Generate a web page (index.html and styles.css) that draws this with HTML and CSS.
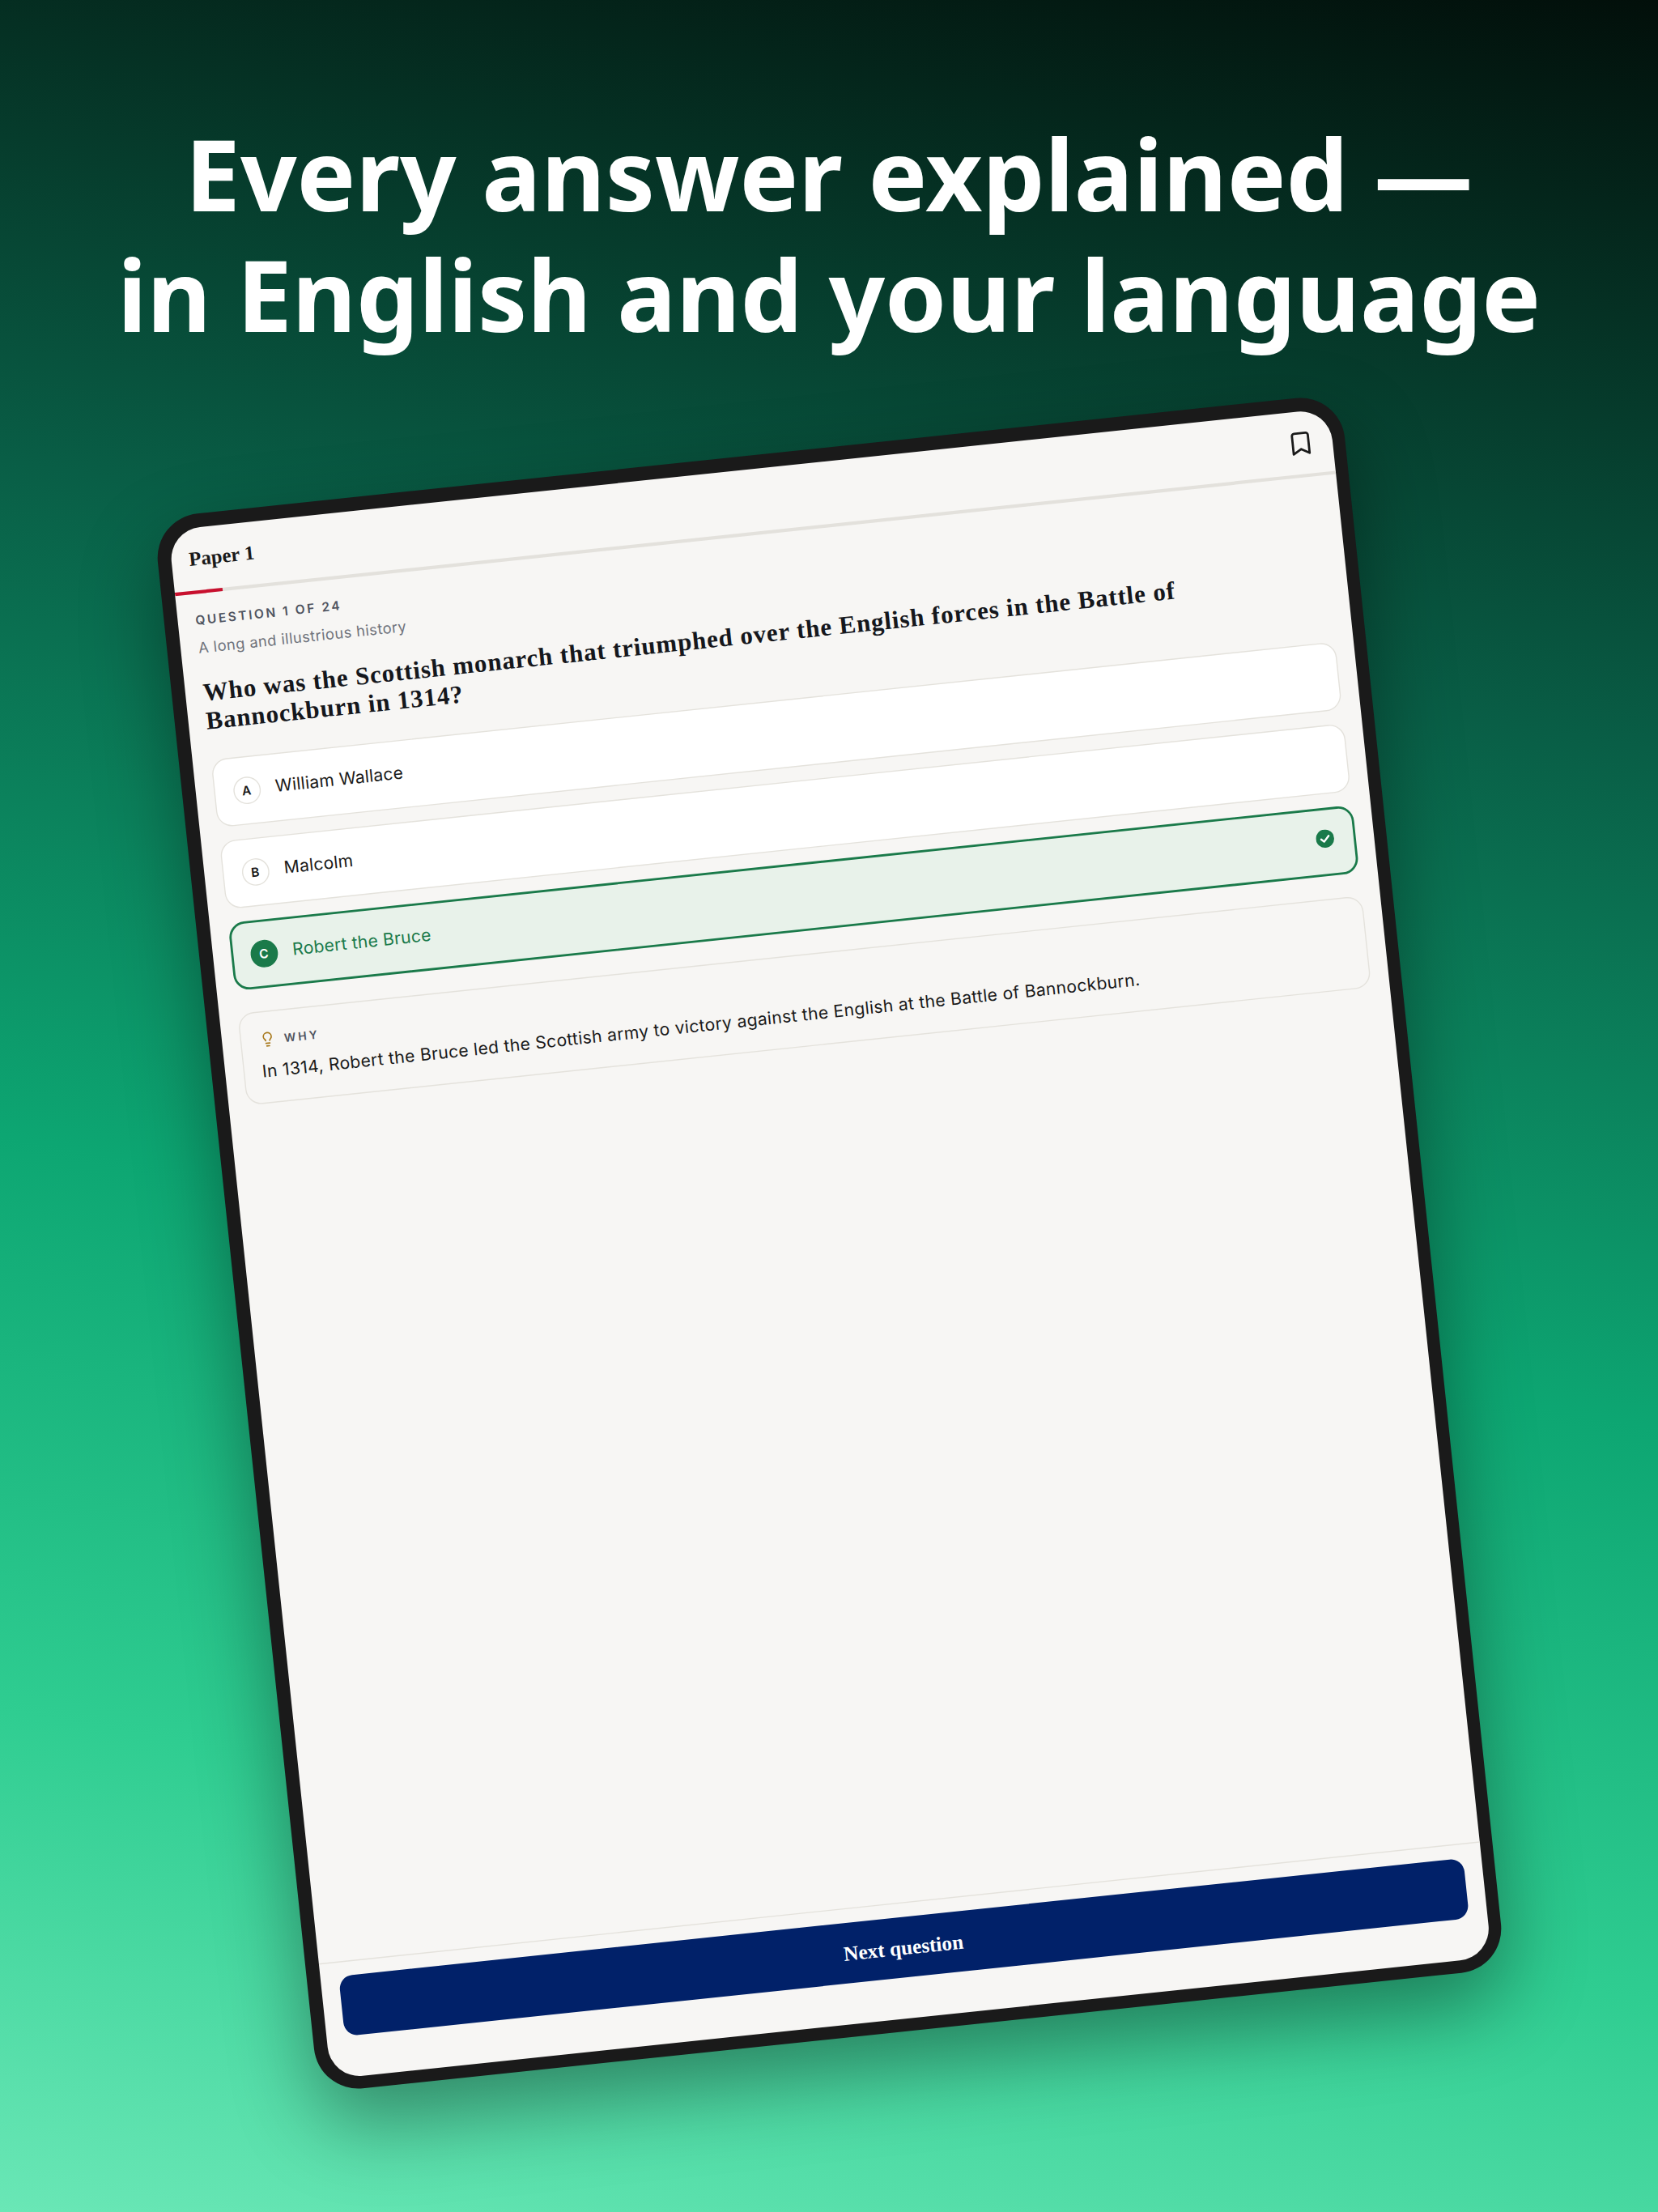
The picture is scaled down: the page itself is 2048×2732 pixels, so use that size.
FILE: index.html
```html
<!DOCTYPE html>
<html lang="en">
<head>
  <meta charset="UTF-8" />
  <title>Every answer explained</title>
  <link rel="stylesheet" href="styles.css">
</head>
<body>
  <div class="page">
    <h1 class="headline">Every answer explained —<br>in English and your language</h1>

    <!-- Tablet frame, the screen inside keeps its 1024x1366 layout -->
    <div class="device">
      <div class="screen">
        <div class="top-bar">
          <span class="paper-title">Paper 1</span>
          <svg class="bookmark" viewBox="0 0 24 24" fill="none" stroke="#1a1a1a" stroke-width="2" stroke-linejoin="round">
            <path d="m19 21-7-4-7 4V5a2 2 0 0 1 2-2h10a2 2 0 0 1 2 2v16z"/>
          </svg>
        </div>
        <div class="progress"><div class="progress-fill"></div></div>

        <div class="content">
          <div class="eyebrow">QUESTION 1 OF 24</div>
          <div class="topic">A long and illustrious history</div>
          <h2 class="question">Who was the Scottish monarch that triumphed over the English forces in the Battle of<br>Bannockburn in 1314?</h2>

          <div class="options">
            <div class="option">
              <span class="letter">A</span>
              <span class="option-text">William Wallace</span>
            </div>
            <div class="option">
              <span class="letter">B</span>
              <span class="option-text">Malcolm</span>
            </div>
            <div class="option correct">
              <span class="letter">C</span>
              <span class="option-text">Robert the Bruce</span>
              <svg class="check" viewBox="0 0 16 16">
                <circle cx="8" cy="8" r="8" fill="#1a7a4a"/>
                <path d="M4.6 8.3 7 10.6l4.4-4.8" fill="none" stroke="#fff" stroke-width="1.7" stroke-linecap="round" stroke-linejoin="round"/>
              </svg>
            </div>
          </div>

          <div class="why">
            <div class="why-label">
              <svg class="bulb" viewBox="0 0 24 24" fill="none" stroke="#a8791c" stroke-width="2" stroke-linecap="round" stroke-linejoin="round">
                <path d="M15 14c.2-1 .7-1.7 1.5-2.5 1-.9 1.5-2.2 1.5-3.5A6 6 0 0 0 6 8c0 1 .2 2.2 1.5 3.5.7.7 1.3 1.5 1.5 2.5"/>
                <path d="M9 18h6"/>
                <path d="M10 22h4"/>
              </svg>
              <span>WHY</span>
            </div>
            <p class="why-text">In 1314, Robert the Bruce led the Scottish army to victory against the English at the Battle of Bannockburn.</p>
          </div>
        </div>

        <div class="footer">
          <div class="next-btn">Next question</div>
        </div>
      </div>
    </div>
  </div>
</body>
</html>
```

FILE: styles.css
```css
body {
  margin: 0;
  font-family: "Inter", "Liberation Sans", sans-serif;
  color: #1a1a1a;
}

.page {
  width: 2048px;
  height: 2732px;
  overflow: hidden;
  display: flex;
  flex-direction: column;
  align-items: center;
  background: linear-gradient(190deg, #020f0a 0%, #095e46 30%, #0da672 57%, #2fcd91 80%, #6ae7b6 100%);
}

/* Titular */
.headline {
  margin: 140px 0 0;
  font-family: "Noto Sans", sans-serif;
  font-size: 122px;
  line-height: 148.5px;
  font-weight: 700;
  color: #fff;
  text-align: center;
  white-space: nowrap;
}

/* Marco de la tablet */
.device {
  flex: none;
  margin-top: 404px;
  box-sizing: border-box;
  width: 1047px;
  height: 1389px;
  padding: 11.5px;
  border-radius: 39px;
  background-color: #1a1a1a;
  box-shadow: 0 30px 70px rgba(0, 0, 0, 0.38);
  transform: rotate(-6deg) scale(1.408);
}

.screen {
  width: 1024px;
  height: 1366px;
  border-radius: 28px;
  overflow: hidden;
  background-color: #f7f6f4;
  display: flex;
  flex-direction: column;
}

/* Barra superior */
.top-bar {
  flex: none;
  height: 55px;
  padding: 0 16px;
  display: flex;
  align-items: center;
  justify-content: space-between;
}

.paper-title {
  font-family: "Liberation Serif", serif;
  font-size: 17.5px;
  font-weight: 700;
}

.bookmark {
  width: 24px;
  height: 24px;
  margin-top: 2px;
}

.progress {
  flex: none;
  height: 3px;
  background-color: #e3e1dc;
}

.progress-fill {
  width: 4.17%;
  height: 100%;
  background-color: #c8102e;
}

/* Contenido */
.content {
  padding: 16.5px 16px 0;
}

.eyebrow {
  font-size: 11px;
  line-height: 14px;
  font-weight: 600;
  letter-spacing: 1.85px;
  color: #4f5460;
}

.topic {
  margin-top: 8px;
  font-size: 13px;
  line-height: 18px;
  color: #6f737c;
  letter-spacing: 0.32px;
}

.question {
  margin: 17.5px 0 0;
  font-family: "Liberation Serif", serif;
  font-size: 22px;
  line-height: 25.5px;
  font-weight: 700;
  letter-spacing: 0.65px;
  color: #15171c;
}

.options {
  margin-top: 21px;
  display: flex;
  flex-direction: column;
  gap: 12px;
}

.option {
  box-sizing: border-box;
  height: 60px;
  padding: 0 16px;
  display: flex;
  align-items: center;
  gap: 13.5px;
  background-color: #fff;
  border: 1px solid #e4e2dc;
  border-radius: 14px;
}

.letter {
  flex: none;
  box-sizing: border-box;
  width: 24px;
  height: 24px;
  display: flex;
  align-items: center;
  justify-content: center;
  font-size: 11px;
  font-weight: 600;
  border: 1px solid #e4e2dc;
  border-radius: 50%;
}

.option-text {
  padding-bottom: 3px;
  font-size: 15px;
  letter-spacing: 0.15px;
}

.option.correct {
  padding: 0 15px;
  background-color: #e8f2ea;
  border: 2px solid #1a7a4a;
}

.option.correct .letter {
  color: #fff;
  background-color: #1a7a4a;
  border-color: #1a7a4a;
}

.option.correct .option-text {
  color: #1a7a4a;
}

.check {
  width: 16px;
  height: 16px;
  margin-left: auto;
  margin-top: -6px;
  margin-right: 2px;
}

/* Explicacion */
.why {
  margin-top: 20px;
  box-sizing: border-box;
  height: 81px;
  padding: 17px 16px 0;
  border: 1px solid #e4e2dc;
  border-radius: 14px;
}

.why-label {
  display: flex;
  align-items: center;
  gap: 8px;
  font-size: 10px;
  font-weight: 600;
  letter-spacing: 2.2px;
  color: #4f5460;
}

.bulb {
  width: 14px;
  height: 14px;
}

.why-text {
  margin: 11px 0 0;
  font-size: 15px;
  line-height: 20px;
  letter-spacing: 0.235px;
  color: #1a1a1a;
}

/* Pie con el boton */
.footer {
  margin-top: auto;
  height: 102px;
  box-sizing: border-box;
  padding: 12px 16px 0;
  border-top: 1px solid #e4e2dc;
}

.next-btn {
  box-sizing: border-box;
  height: 53px;
  padding-top: 2px;
  display: flex;
  align-items: center;
  justify-content: center;
  font-family: "Liberation Serif", serif;
  font-size: 18px;
  font-weight: 700;
  color: #fff;
  background-color: #012169;
  border-radius: 12px;
}
```
